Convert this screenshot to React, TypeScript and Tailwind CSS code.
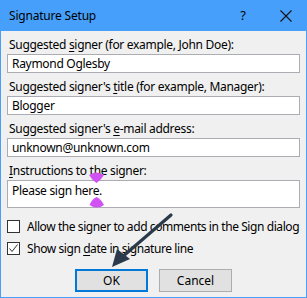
import React from "react";

const font = { fontFamily: '"Noto Sans", "Segoe UI", sans-serif' };

function Label({ pre, key_, post }: { pre: string; key_: string; post: string }) {
  return (
    <div className="h-[23px] flex items-end pb-[1px] pl-[2px]">
      <span className="text-[12px] leading-[16px] tracking-[-0.3px] text-black whitespace-nowrap">
        {pre}
        <span className="underline underline-offset-2">{key_}</span>
        {post}
      </span>
    </div>
  );
}

function Field({ value, tall }: { value: string; tall?: boolean }) {
  return (
    <div
      className={`bg-white border border-[#abadb3] px-[4px] text-[12px] tracking-[-0.3px] text-black ${
        tall ? "h-[28px] pt-[2px] leading-[16px]" : "h-[19px] leading-[17px]"
      }`}
    >
      {value}
    </div>
  );
}

function Check({ checked, children }: { checked?: boolean; children: React.ReactNode }) {
  return (
    <div className="flex items-center h-[13px] gap-[7px]">
      <div className="flex-none w-[13px] h-[13px] border border-[#333] bg-white flex items-center justify-center">
        {checked && (
          <svg width="11" height="11" viewBox="0 0 11 11">
            <path d="M1.5 5.5 L4 8.5 L9.5 1.5" fill="none" stroke="#333" strokeWidth="1" />
          </svg>
        )}
      </div>
      <span className="text-[12px] leading-[16px] tracking-[-0.42px] text-black whitespace-nowrap">{children}</span>
    </div>
  );
}

export default function App() {
  return (
    <div style={font} className="relative w-[307px] h-[298px] bg-[#f0f0f0] border border-[#46a0fb] overflow-hidden">
      {/* Title bar */}
      <div className="h-[30px] bg-[#46a0fb] flex items-center pl-[8px] pr-[14px]">
        <span className="text-[12px] tracking-[-0.2px] text-black flex-1">Signature Setup</span>
        <span className="text-[13px] text-black mr-[34px]">?</span>
        <svg width="12" height="12" viewBox="0 0 12 12">
          <path d="M0.5 0.5 L11.5 11.5 M11.5 0.5 L0.5 11.5" stroke="#111" strokeWidth="1.1" />
        </svg>
      </div>

      {/* Body */}
      <div className="px-[6px]">
        <Label pre="Suggested " key_="s" post="igner (for example, John Doe):" />
        <Field value="Raymond Oglesby" />
        <Label pre="Suggested signer's " key_="t" post="itle (for example, Manager):" />
        <Field value="Blogger" />
        <Label pre="Suggested signer's " key_="e" post="-mail address:" />
        <Field value="unknown@unknown.com" />
        <Label pre="" key_="I" post="nstructions to the signer:" />
        <Field value="Please sign here." tall />

        <div className="flex flex-col gap-[9px] pt-[12px]">
          <Check>Allow the signer to add comments in the Sign dialog</Check>
          <Check checked>
            Show sign <span className="underline underline-offset-2">d</span>ate in signature line
          </Check>
        </div>

        <div className="flex justify-center gap-[11px] pt-[14px]">
          <button className="w-[73px] h-[23px] bg-[#e1e1e1] border-2 border-[#0078d7] text-[12px] text-black">
            OK
          </button>
          <button className="w-[73px] h-[23px] bg-[#e1e1e1] border border-[#adadad] text-[12px] text-black">
            Cancel
          </button>
        </div>
      </div>

      {/* Annotation overlay */}
      <svg className="absolute left-0 top-0 pointer-events-none" width="307" height="298" viewBox="0 0 307 298">
        <g fill="#d152f2">
          <path d="M88 174 Q95 169 103 174 Q100 179 95.5 182 Q91 179 88 174 Z" />
          <path d="M88.5 204 Q91 198 95.5 196 Q100 198 103 204 Q96 209 88.5 204 Z" />
        </g>
        <line x1="170" y1="214" x2="120" y2="257" stroke="#2b3a4b" strokeWidth="3.2" strokeLinecap="round" />
        <path d="M111 266 L116 248 L129 258 Z" fill="#2b3a4b" />
      </svg>
    </div>
  );
}
